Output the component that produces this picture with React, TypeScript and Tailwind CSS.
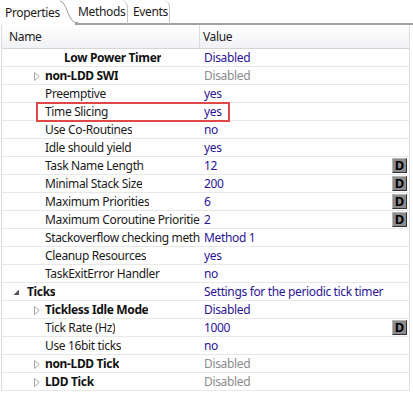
import React from "react";

type Row = {
  name: string;
  indent: number;
  bold?: boolean;
  expander?: "closed" | "open";
  value: string;
  gray?: boolean;
  d?: boolean;
};

const rows: Row[] = [
  { name: "Low Power Timer", indent: 64, bold: true, value: "Disabled" },
  { name: "non-LDD SWI", indent: 45, bold: true, expander: "closed", value: "Disabled", gray: true },
  { name: "Preemptive", indent: 45, value: "yes" },
  { name: "Time Slicing", indent: 45, value: "yes" },
  { name: "Use Co-Routines", indent: 45, value: "no" },
  { name: "Idle should yield", indent: 45, value: "yes" },
  { name: "Task Name Length", indent: 45, value: "12", d: true },
  { name: "Minimal Stack Size", indent: 45, value: "200", d: true },
  { name: "Maximum Priorities", indent: 45, value: "6", d: true },
  { name: "Maximum Coroutine Priorities", indent: 45, value: "2", d: true },
  { name: "Stackoverflow checking method", indent: 45, value: "Method 1" },
  { name: "Cleanup Resources", indent: 45, value: "yes" },
  { name: "TaskExitError Handler", indent: 45, value: "no" },
  { name: "Ticks", indent: 27, bold: true, expander: "open", value: "Settings for the periodic tick timer" },
  { name: "Tickless Idle Mode", indent: 45, bold: true, expander: "closed", value: "Disabled" },
  { name: "Tick Rate (Hz)", indent: 45, value: "1000", d: true },
  { name: "Use 16bit ticks", indent: 45, value: "no" },
  { name: "non-LDD Tick", indent: 45, bold: true, expander: "closed", value: "Disabled", gray: true },
  { name: "LDD Tick", indent: 45, bold: true, expander: "closed", value: "Disabled", gray: true },
];

function Expander({ kind }: { kind: "closed" | "open" }) {
  if (kind === "open") {
    return (
      <svg width="7" height="7" viewBox="0 0 7 7" className="absolute" style={{ left: -14, top: 6 }}>
        <path d="M6 0.5 L6 6 L0.5 6 Z" fill="#555555" />
      </svg>
    );
  }
  return (
    <svg width="6" height="9" viewBox="0 0 6 9" className="absolute" style={{ left: -11, top: 5 }}>
      <path d="M0.5 0.5 L5.2 4.5 L0.5 8.5 Z" fill="none" stroke="#a6a6a6" strokeWidth="1" />
    </svg>
  );
}

export default function App() {
  return (
    <div
      className="relative w-[413px] h-[394px] bg-white overflow-hidden text-[12px] leading-none tracking-[-0.35px]"
      style={{ fontFamily: '"Noto Sans", "Open Sans", sans-serif' }}
    >
      {/* Tab strip */}
      <div className="relative flex h-[25px] items-stretch">
        <div className="flex items-center w-[60px] shrink-0 pl-[5px] bg-white text-[#1a1a1a] whitespace-nowrap">Properties</div>
        <svg width="18" height="25" viewBox="0 0 18 25" className="shrink-0">
          <path d="M0 25 L0 1 C7 1 8 23 16 23 L18 23 L18 25 Z" fill="#ffffff" />
          <path d="M-1 0.5 C7 0.5 8 22.5 16 22.5 L18 22.5" fill="none" stroke="#9a9a9a" strokeWidth="1" />
          <rect x="15" y="23" width="3" height="2" fill="#a0a0a0" />
        </svg>
        <div className="flex items-center w-[50px] shrink-0 text-[#1a1a1a] border-b-2 border-b-[#a0a0a0] whitespace-nowrap rounded-tr-[7px] border-r border-r-[#c4c4c4]">
          Methods
        </div>
        <div className="flex items-center pl-[5px] w-[42px] shrink-0 text-[#1a1a1a] border-r border-r-[#c4c4c4] rounded-tr-[7px] border-b-2 border-b-[#a0a0a0] whitespace-nowrap">
          Events
        </div>
        <div className="flex-1 border-b-2 border-[#a0a0a0]" />
      </div>

      {/* Table */}
      <div className="ml-[1px] w-[409px] border-l border-r border-[#dcdcdc]">
        {/* Header */}
        <div className="flex h-[24px] border-b border-[#d5d5d5] bg-gradient-to-b from-[#ffffff] to-[#f1f2f5] text-[#1a1a1a]">
          <div className="w-[198px] pl-[7px] flex items-center border-r border-[#dcdcdc]">Name</div>
          <div className="flex-1 pl-[3px] flex items-center">Value</div>
        </div>
        {/* Rows */}
        {rows.map((r, i) => (
          <div key={i} className="flex h-[18px] border-b border-[#e8e8e8]">
            <div className="w-[198px] shrink-0 relative whitespace-nowrap">
              <div className="relative h-full flex items-center min-w-0" style={{ marginLeft: r.indent - 2 }}>
                {r.expander && <Expander kind={r.expander} />}
                <span
                  className={
                    "block overflow-hidden whitespace-nowrap min-w-0 leading-[17px] " +
                    (r.bold ? "font-bold text-[#111111]" : "text-[#1a1a1a]")
                  }
                >
                  {r.name}
                </span>
              </div>
            </div>
            <div className="flex-1 flex items-center pl-[4px] pr-[2px] whitespace-nowrap overflow-hidden">
              <span className={"leading-[17px] " + (r.gray ? "text-[#8c8c8c]" : "text-[#2b1496]")}>{r.value}</span>
              {r.d && (
                <span className="ml-auto w-[15px] h-[15px] flex items-center justify-center bg-[#8c8c8c] border border-t-[#b5b5b5] border-l-[#b5b5b5] border-r-[#303030] border-b-[#303030] font-bold text-[13px] tracking-normal text-black">
                  D
                </span>
              )}
            </div>
          </div>
        ))}
      </div>

      {/* Highlight annotation */}
      <div className="absolute left-[36px] top-[102px] w-[194px] h-[20px] border-2 border-[#e04848] pointer-events-none" />
    </div>
  );
}
